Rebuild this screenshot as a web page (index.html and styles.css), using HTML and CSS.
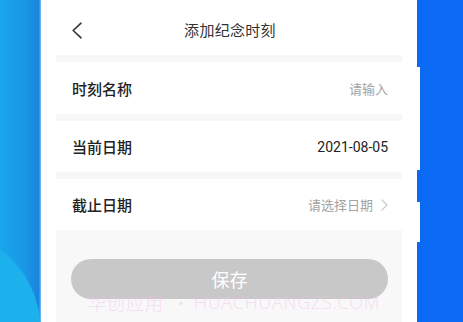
FILE: index.html
```html
<!DOCTYPE html>
<html lang="zh">
<head>
<meta charset="utf-8">
<link rel="stylesheet" href="styles.css">
</head>
<body>
<div class="stage">
  <div class="bg-left"></div>
  <div class="phone">
    <div class="header">
      <span class="back">
        <svg width="12" height="17" viewBox="0 0 12 17"><path d="M10 1.2 L2.2 8.5 L10 15.8" fill="none" stroke="#333" stroke-width="1.6" stroke-linecap="round" stroke-linejoin="round"/></svg>
      </span>
      <span class="title">添加纪念时刻</span>
    </div>
    <div class="sep"></div>
    <div class="row">
      <span class="label">时刻名称</span>
      <span class="value muted">请输入</span>
    </div>
    <div class="sep"></div>
    <div class="row">
      <span class="label">当前日期</span>
      <span class="value date">2021-08-05</span>
    </div>
    <div class="sep"></div>
    <div class="row">
      <span class="label">截止日期</span>
      <span class="value muted">请选择日期
        <svg class="chev" width="7" height="12" viewBox="0 0 7 12"><path d="M1 1 L6 6 L1 11" fill="none" stroke="#ccc" stroke-width="1.2" stroke-linecap="round" stroke-linejoin="round"/></svg>
      </span>
    </div>
    <div class="footer">
      <div class="btn">保存</div>
    </div>
    <div class="watermark"><span class="cn">华创应用</span><span class="dot">·</span><span class="latin">HUACHUANGZS.COM</span></div>
    <div class="side-btn side-a"></div>
    <div class="side-btn side-b"></div>
  </div>
  <div class="bg-right"></div>
</div>
</body>
</html>
```
FILE: styles.css
```css
html, body {
  margin: 0;
  padding: 0;
}
body {
  width: 463px;
  height: 322px;
  overflow: hidden;
  font-family: "Noto Sans CJK SC", "Noto Sans", sans-serif;
}
.stage {
  display: flex;
  width: 463px;
  height: 322px;
}
.bg-left {
  width: 41px;
  flex: none;
  background:
    radial-gradient(circle at -60px 330px, #1cb0ed 0, #1cb0ed 100px, rgba(28,176,237,0) 101px),
    linear-gradient(90deg, #19a6ec 0%, #1a97e6 60%, #1a84dc 95%, #7cc4f0 100%);
}
.bg-right {
  flex: 1;
  background:
    radial-gradient(circle at 440px -30px, #0f72f6 0, #0f72f6 38px, rgba(15,114,246,0) 39px),
    #0a6af4;
}
.phone {
  position: relative;
  width: 346px;
  flex: none;
  padding: 0 15px;
  background: #fff;
  display: flex;
  flex-direction: column;
}
.header {
  height: 55px;
  display: flex;
  align-items: center;
  justify-content: center;
  position: relative;
}
.back {
  position: absolute;
  left: 15px;
  top: 22px;
  display: flex;
}
.title {
  font-size: 15px;
  color: #333;
  letter-spacing: 0.3px;
  margin-left: 2px;
  margin-top: 4px;
}
.sep {
  height: 7px;
  background: #f7f7f7;
  flex: none;
}
.row {
  height: 51px;
  display: flex;
  align-items: center;
  justify-content: space-between;
  padding: 0 14px 0 16px;
  flex: none;
}
.row:nth-of-type(3) {
  height: 52px;
}
.label {
  font-size: 15px;
  font-weight: 500;
  color: #222;
}
.value {
  font-size: 13px;
  display: flex;
  align-items: center;
  gap: 8px;
}
.muted {
  color: #a3a3a3;
}
.date {
  font-family: "Roboto", "Noto Sans", sans-serif;
  font-size: 14px;
  color: #222;
}
.chev {
  display: block;
}
.footer {
  flex: 1;
  background: #f8f8f8;
  padding: 29px 14px 0 15px;
}
.btn {
  height: 40px;
  border-radius: 20px;
  background: #c8c8c8;
  color: #fff;
  font-size: 18px;
  display: flex;
  align-items: center;
  justify-content: center;
}
.watermark {
  position: absolute;
  left: 47px;
  top: 289px;
  font-size: 18px;
  font-weight: 300;
  color: rgba(240, 190, 232, 0.5);
  white-space: nowrap;
  display: flex;
  align-items: center;
  font-family: "Noto Sans CJK SC", "Open Sans", sans-serif;
}
.cn {
  letter-spacing: 1px;
}
.dot {
  margin: 0 4px 0 8px;
}
.latin {
  font-family: "Open Sans", "Noto Sans", sans-serif;
  font-size: 18px;
  letter-spacing: 0.7px;
}
.side-btn {
  position: absolute;
  right: -3px;
  width: 3px;
  background: #fff;
}
.side-a {
  top: 67px;
  height: 103px;
}
.side-b {
  top: 202px;
  height: 40px;
}
```
